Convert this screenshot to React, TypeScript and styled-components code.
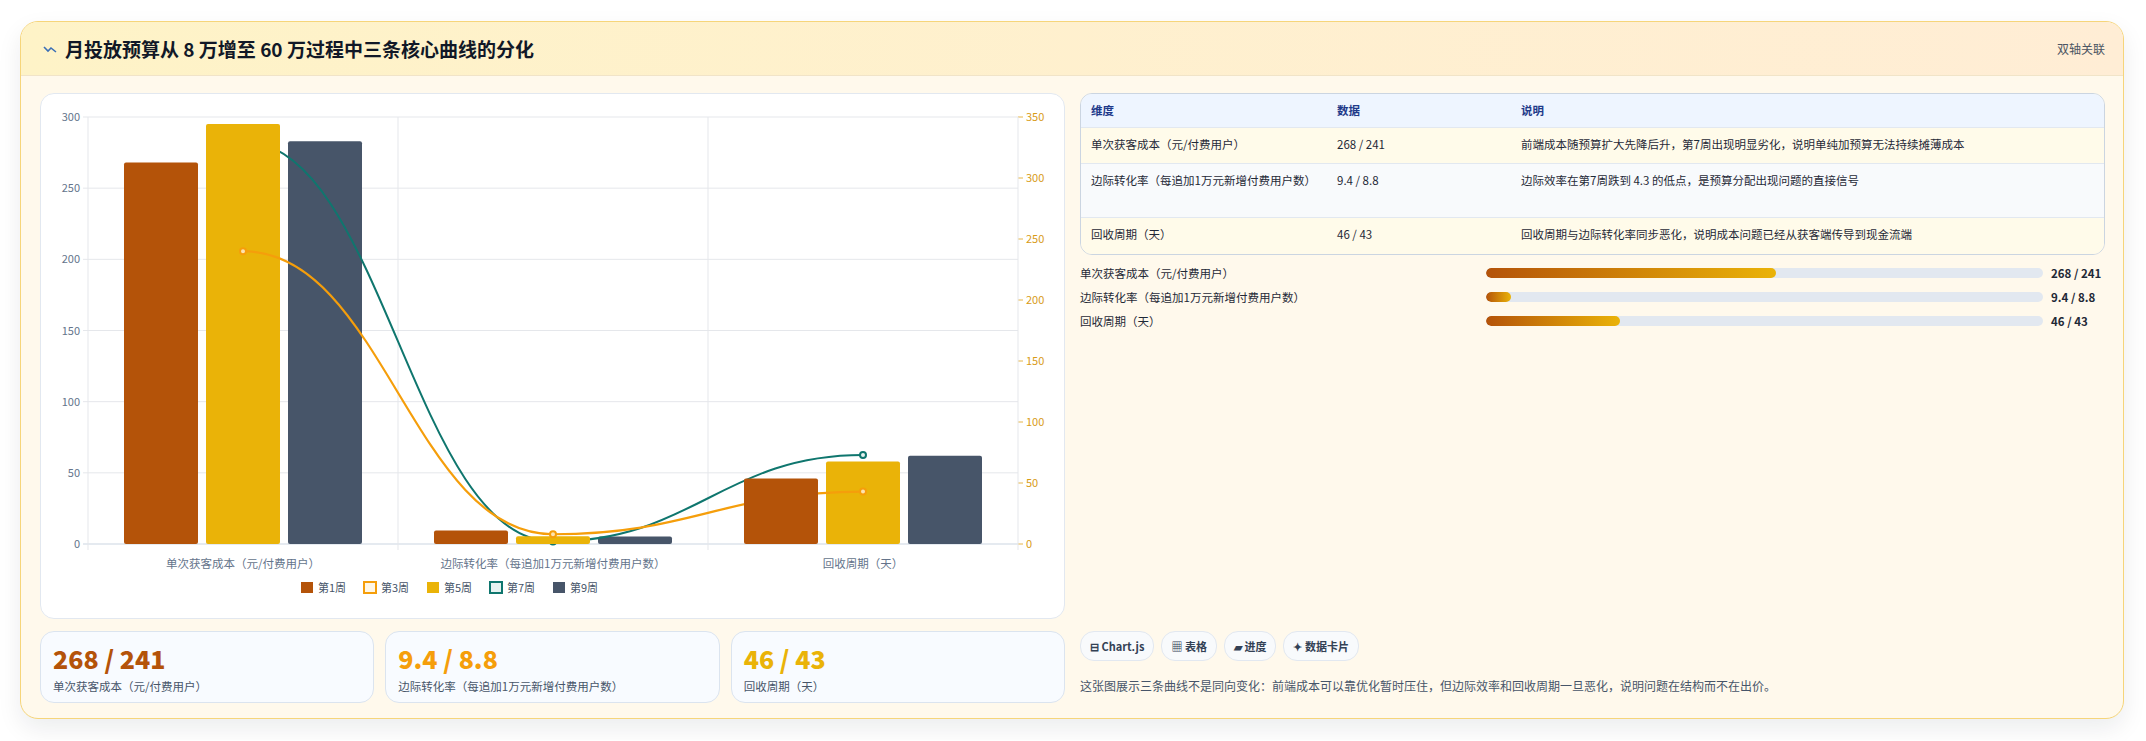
import styled, { createGlobalStyle } from "styled-components";

const GlobalStyle = createGlobalStyle`
  body {
    margin: 0;
    background: #ffffff;
    font-family: "Noto Sans CJK SC", "Noto Sans", sans-serif;
  }
`;

const Page = styled.div`
  padding: 21px 22px 21px 20px;
`;

const Card = styled.div`
  border: 1px solid #f6d57a;
  border-radius: 18px;
  background: #fff9ec;
  box-shadow: 0 10px 24px rgba(15, 23, 42, 0.08);
  overflow: hidden;
`;

const Header = styled.div`
  height: 53px;
  display: flex;
  align-items: center;
  justify-content: space-between;
  padding: 0 18px 0 22px;
  background: linear-gradient(90deg, #fef3c7, #ffedd5);
  border-bottom: 1px solid #f1e4c8;
`;

const Title = styled.h1`
  margin: 0;
  display: flex;
  align-items: center;
  gap: 8px;
  font-size: 19px;
  font-weight: 700;
  color: #111827;
`;

const Tag = styled.span`
  font-size: 12px;
  color: #4b5563;
`;

const Body = styled.div`
  display: grid;
  grid-template-columns: 1025px 1fr;
  gap: 15px;
  padding: 17px 18px 15px 19px;
`;

const Column = styled.div`
  display: flex;
  flex-direction: column;
  gap: 12px;
`;

const ChartBox = styled.div`
  height: 524px;
  background: #ffffff;
  border: 1px solid #e2e8f0;
  border-radius: 14px;
  overflow: hidden;
`;

const Stats = styled.div`
  display: grid;
  grid-template-columns: repeat(3, 1fr);
  gap: 11px;
`;

const Stat = styled.div`
  height: 72px;
  border: 1px solid #dbe4ef;
  border-radius: 14px;
  background: #f8fbff;
  padding: 10px 12px 0;
  box-sizing: border-box;
`;

const StatValue = styled.div<{ $c: string }>`
  font-size: 25px;
  font-weight: 800;
  color: ${(p) => p.$c};
  line-height: 32px;
`;

const StatLabel = styled.div`
  font-size: 11.5px;
  color: #475569;
  margin-top: 4px;
`;

const Table = styled.div`
  border: 1px solid #cbd5e1;
  border-radius: 12px;
  overflow: hidden;
`;

const Row = styled.div<{ $bg: string; $h: number }>`
  display: grid;
  grid-template-columns: 246px 184px 1fr;
  min-height: ${(p) => p.$h}px;
  background: ${(p) => p.$bg};
  border-top: 1px solid #e2e8f0;
  &:first-child {
    border-top: 0;
  }
`;

const Cell = styled.div<{ $head?: boolean }>`
  padding: 8px 10px;
  font-size: 11.5px;
  line-height: 17px;
  color: ${(p) => (p.$head ? "#1e3a8a" : "#1f2937")};
  font-weight: ${(p) => (p.$head ? 700 : 400)};
`;

const Progress = styled.div`
  display: flex;
  flex-direction: column;
  gap: 6px;
  margin-top: -3px;
`;

const ProgRow = styled.div`
  display: grid;
  grid-template-columns: 398px 557px 1fr;
  align-items: center;
  height: 18px;
  gap: 0 8px;
  font-size: 11.5px;
  color: #1f2937;
`;

const Track = styled.div`
  height: 10px;
  border-radius: 5px;
  background: #e2e8f0;
  overflow: hidden;
`;

const Fill = styled.div`
  height: 100%;
  border-radius: 5px;
  background: linear-gradient(90deg, #b45309, #eab308);
`;

const ProgVal = styled.span`
  font-weight: 700;
`;

const Spacer = styled.div`
  flex: 1;
`;

const Chips = styled.div`
  display: flex;
  gap: 7px;
`;

const Chip = styled.span`
  height: 28px;
  padding: 0 9px;
  display: flex;
  align-items: center;
  gap: 3px;
  border: 1px solid #e2e8f0;
  border-radius: 14px;
  background: #f8fafc;
  font-size: 11px;
  font-weight: 700;
  color: #334155;
`;

const Note = styled.p`
  margin: 4px 0 9px;
  font-size: 12px;
  color: #475569;
`;

const cats = ["单次获客成本（元/付费用户）", "边际转化率（每追加1万元新增付费用户数）", "回收周期（天）"];
const bars = [
  { c: "#b45309", v: [268, 9.4, 46] },
  { c: "#eab308", v: [295, 5.5, 58] },
  { c: "#475569", v: [283, 5.2, 62] },
];
const L = 47, R = 977, T = 23, B = 450;
const yl = (v: number) => B - (v / 300) * (B - T);
const yr = (v: number) => B - (v / 350) * (B - T);
const cx = (i: number) => L + 155 + i * 310;

function curve(pts: [number, number][]) {
  let d = `M${pts[0][0]},${pts[0][1]}`;
  for (let i = 1; i < pts.length; i++) {
    const [x0, y0] = pts[i - 1];
    const [x1, y1] = pts[i];
    const dx = (x1 - x0) * 0.45;
    d += ` C${x0 + dx},${y0} ${x1 - dx},${y1} ${x1},${y1}`;
  }
  return d;
}

function Chart() {
  const orange: [number, number][] = [240, 8, 43].map((v, i) => [cx(i), yr(v)]);
  const teal: [number, number][] = [330, 2, 73].map((v, i) => [cx(i), yr(v)]);
  const barsOf = (k: number) =>
    bars[k].v.map((v, i) => (
      <rect key={i} x={cx(i) - 119 + k * 82} y={yl(v)} width={74} height={B - yl(v)} rx={2} fill={bars[k].c} />
    ));
  const legend = [
    { l: "第1周", f: "#b45309", s: "#b45309" },
    { l: "第3周", f: "#fff7e6", s: "#f59e0b" },
    { l: "第5周", f: "#eab308", s: "#eab308" },
    { l: "第7周", f: "#e6f2f0", s: "#0f766e" },
    { l: "第9周", f: "#475569", s: "#475569" },
  ];
  return (
    <svg width="1025" height="524" viewBox="0 0 1025 524" fontFamily="Noto Sans CJK SC, sans-serif">
      {[0, 50, 100, 150, 200, 250, 300].map((v) => (
        <g key={v}>
          <line x1={L - 5} x2={R} y1={yl(v)} y2={yl(v)} stroke={v === 0 ? "#cbd5e1" : "#e5e7eb"} />
          <text x={L - 8} y={yl(v) + 4} textAnchor="end" fontSize="11" fill="#64748b">{v}</text>
        </g>
      ))}
      {[0, 50, 100, 150, 200, 250, 300, 350].map((v) => (
        <g key={v}>
          <line x1={R} x2={R + 5} y1={yr(v)} y2={yr(v)} stroke="#e5b54a" />
          <text x={R + 8} y={yr(v) + 4} fontSize="11" fill="#d89b17">{v}</text>
        </g>
      ))}
      {[0, 1, 2, 3].map((i) => (
        <line key={i} x1={L + i * 310} x2={L + i * 310} y1={T} y2={B + 6} stroke="#e5e7eb" />
      ))}
      {barsOf(2)}
      <path d={curve(teal)} fill="none" stroke="#0f766e" strokeWidth="2" />
      {teal.map(([x, y], i) => (
        <circle key={i} cx={x} cy={y} r={3} fill="#e6f2f0" stroke="#0f766e" strokeWidth="2" />
      ))}
      {barsOf(1)}
      <path d={curve(orange)} fill="none" stroke="#f59e0b" strokeWidth="2.2" />
      {orange.map(([x, y], i) => (
        <circle key={i} cx={x} cy={y} r={3} fill="#fde3b0" stroke="#f59e0b" strokeWidth="2" />
      ))}
      {barsOf(0)}
      {cats.map((c, i) => (
        <text key={i} x={cx(i)} y={474} textAnchor="middle" fontSize="11.5" fill="#64748b">{c}</text>
      ))}
      {legend.map((g, i) => {
        const x = 260 + i * 63;
        return (
          <g key={i}>
            <rect x={x} y={488} width={12} height={11} fill={g.f} stroke={g.s} strokeWidth={g.f === g.s ? 0 : 2} />
            <text x={x + 17} y={498} fontSize="11" fill="#475569">{g.l}</text>
          </g>
        );
      })}
    </svg>
  );
}

const rows = [
  { d: "单次获客成本（元/付费用户）", v: "268 / 241", n: "前端成本随预算扩大先降后升，第7周出现明显劣化，说明单纯加预算无法持续摊薄成本", bg: "#fffbea", h: 35 },
  { d: "边际转化率（每追加1万元新增付费用户数）", v: "9.4 / 8.8", n: "边际效率在第7周跌到 4.3 的低点，是预算分配出现问题的直接信号", bg: "#f8fafc", h: 53 },
  { d: "回收周期（天）", v: "46 / 43", n: "回收周期与边际转化率同步恶化，说明成本问题已经从获客端传导到现金流端", bg: "#fffbea", h: 36 },
];

const progress = [
  { l: "单次获客成本（元/付费用户）", v: "268 / 241", w: 52 },
  { l: "边际转化率（每追加1万元新增付费用户数）", v: "9.4 / 8.8", w: 4.5 },
  { l: "回收周期（天）", v: "46 / 43", w: 24 },
];

export default function App() {
  return (
    <>
      <GlobalStyle />
      <Page>
        <Card>
          <Header>
            <Title>
              <svg width="14" height="10" viewBox="0 0 14 10">
                <path d="M1 3 L5 7 L8 4 L13 8" fill="none" stroke="#3b6fb6" strokeWidth="1.6" />
              </svg>
              月投放预算从 8 万增至 60 万过程中三条核心曲线的分化
            </Title>
            <Tag>双轴关联</Tag>
          </Header>
          <Body>
            <Column>
              <ChartBox>
                <Chart />
              </ChartBox>
              <Stats>
                <Stat>
                  <StatValue $c="#b45309">268 / 241</StatValue>
                  <StatLabel>单次获客成本（元/付费用户）</StatLabel>
                </Stat>
                <Stat>
                  <StatValue $c="#f59e0b">9.4 / 8.8</StatValue>
                  <StatLabel>边际转化率（每追加1万元新增付费用户数）</StatLabel>
                </Stat>
                <Stat>
                  <StatValue $c="#eab308">46 / 43</StatValue>
                  <StatLabel>回收周期（天）</StatLabel>
                </Stat>
              </Stats>
            </Column>
            <Column>
              <Table>
                <Row $bg="#eef5ff" $h={33}>
                  <Cell $head>维度</Cell>
                  <Cell $head>数据</Cell>
                  <Cell $head>说明</Cell>
                </Row>
                {rows.map((r) => (
                  <Row key={r.d} $bg={r.bg} $h={r.h}>
                    <Cell>{r.d}</Cell>
                    <Cell>{r.v}</Cell>
                    <Cell>{r.n}</Cell>
                  </Row>
                ))}
              </Table>
              <Progress>
                {progress.map((p) => (
                  <ProgRow key={p.l}>
                    <span>{p.l}</span>
                    <Track>
                      <Fill style={{ width: `${p.w}%` }} />
                    </Track>
                    <ProgVal>{p.v}</ProgVal>
                  </ProgRow>
                ))}
              </Progress>
              <Spacer />
              <Chips>
                <Chip>⊟ Chart.js</Chip>
                <Chip>▦ 表格</Chip>
                <Chip>▰ 进度</Chip>
                <Chip>✦ 数据卡片</Chip>
              </Chips>
              <Note>这张图展示三条曲线不是同向变化：前端成本可以靠优化暂时压住，但边际效率和回收周期一旦恶化，说明问题在结构而不在出价。</Note>
            </Column>
          </Body>
        </Card>
      </Page>
    </>
  );
}
